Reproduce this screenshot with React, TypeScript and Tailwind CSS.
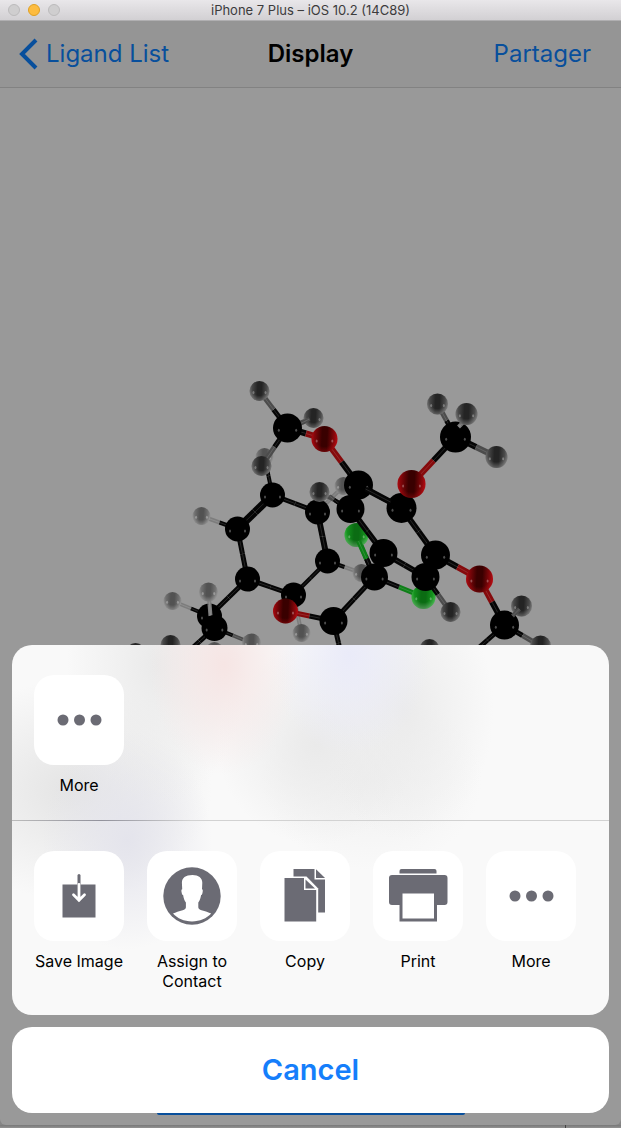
import type { ReactNode } from "react";

type Element = "C" | "H" | "O" | "Cl" | "G";
type Atom = [kind: Element, x: number, y: number, r: number];
type Bond = [x1: number, y1: number, c1: Element, x2: number, y2: number, c2: Element, width: number];

const bondColor: Record<Element, string> = {
  C: "#050505",
  H: "#4c4c4c",
  G: "#7d7d7d",
  O: "#850a0c",
  Cl: "#0e7f18",
};

/* Far to near: each layer draws its bonds and then its atoms. */
const layers: { bonds: Bond[]; atoms: Atom[] }[] = [
  {
    bonds: [
      [264, 457, "C", 272, 495, "C", 4],
      [343, 486, "G", 317, 512, "G", 4],
      [361, 573, "G", 327, 561, "C", 4],
      [301, 633, "G", 293, 595, "G", 4],
      [201, 516, "G", 237, 529, "C", 4],
      [272, 495, "C", 317, 512, "C", 5],
      [317, 512, "C", 327, 561, "C", 6],
      [327, 561, "C", 293, 595, "C", 4],
      [293, 595, "C", 247, 579, "C", 5],
      [247, 579, "C", 237, 529, "C", 5],
      [237, 529, "C", 272, 495, "C", 8],
      [247, 579, "C", 209, 616, "C", 5],
      [172, 601, "G", 209, 616, "C", 4],
    ],
    atoms: [
      ["G", 264, 457, 9],
      ["G", 343, 486, 9],
      ["G", 361, 573, 9],
      ["G", 301, 633, 9],
      ["G", 201, 516, 9],
      ["C", 272, 495, 12.5],
      ["C", 317, 512, 12.5],
      ["C", 327, 561, 12.5],
      ["C", 293, 595, 12.5],
      ["C", 247, 579, 12.5],
      ["C", 237, 529, 12.5],
      ["G", 172, 601, 9],
      ["C", 209, 616, 12.5],
      ["G", 214, 651, 9],
    ],
  },
  {
    bonds: [
      [208, 592, "G", 210, 616, "G", 4],
      [214, 628, "C", 251, 643, "H", 4],
      [214, 628, "C", 184, 655, "C", 5],
      [285, 611, "O", 333, 621, "C", 5],
      [333, 621, "C", 374, 577, "C", 5],
      [333, 621, "C", 343, 665, "C", 5],
      [356, 535, "Cl", 374, 577, "C", 5],
      [423, 597, "Cl", 374, 577, "C", 5],
    ],
    atoms: [
      ["G", 208, 592, 9.5],
      ["C", 214, 628, 13],
      ["G", 251, 643, 9.5],
      ["H", 170, 645, 10],
      ["H", 135, 653, 10],
      ["O", 285, 611, 12.5],
      ["C", 333, 621, 14],
      ["Cl", 356, 535, 12],
      ["Cl", 423, 597, 12],
    ],
  },
  {
    bonds: [[358, 541, "Cl", 374, 577, "C", 5]],
    atoms: [["C", 374, 577, 13.5]],
  },
  {
    bonds: [
      [319, 492, "H", 350, 509, "C", 4],
      [350, 509, "C", 383, 553, "C", 6],
      [383, 553, "C", 425, 577, "C", 6],
      [401, 508, "C", 435, 555, "C", 6],
      [358, 485, "C", 401, 508, "C", 6],
      [425, 577, "C", 450, 612, "H", 5],
      [435, 555, "C", 479, 579, "O", 6],
      [324, 439, "O", 358, 485, "C", 6],
      [287, 428, "C", 313, 418, "H", 5],
      [287, 428, "C", 259, 391, "H", 5],
      [287, 428, "C", 261, 466, "H", 5],
      [287, 428, "C", 324, 439, "O", 6],
      [411, 484, "O", 455, 437, "C", 6],
      [479, 579, "O", 504, 625, "C", 6],
      [504, 625, "C", 540, 646, "H", 5],
      [504, 625, "C", 470, 655, "C", 5],
      [455, 437, "C", 437, 404, "H", 5],
      [455, 437, "C", 496, 457, "H", 6],
    ],
    atoms: [
      ["H", 319, 492, 10],
      ["H", 450, 612, 10],
      ["C", 350, 509, 14],
      ["C", 383, 553, 14],
      ["C", 435, 555, 14.5],
      ["C", 425, 577, 14],
      ["C", 358, 485, 14.5],
      ["C", 401, 508, 15],
      ["H", 313, 418, 10],
      ["C", 287, 428, 14.5],
      ["H", 259, 391, 10],
      ["H", 261, 466, 10],
      ["O", 324, 439, 13],
      ["O", 411, 484, 14],
      ["O", 479, 579, 13.5],
      ["H", 437, 404, 10.5],
      ["C", 455, 437, 15.5],
      ["H", 496, 457, 11],
      ["C", 504, 625, 14.5],
      ["H", 521, 606, 10.5],
      ["H", 540, 646, 10.5],
      ["H", 429, 649, 10],
    ],
  },
  {
    bonds: [
      [365, 489, "C", 390, 502, "C", 5],
      [329, 496, "H", 338, 503, "C", 4],
      [458, 427, "G", 463, 422, "G", 4],
      [512, 616, "H", 519, 609, "H", 4],
      [301, 423, "H", 309, 419, "H", 4],
    ],
    atoms: [["H", 466, 414, 11]],
  },
];

function BondShape({ bond }: { bond: Bond }) {
  const [x1, y1, c1, x2, y2, c2, width] = bond;
  const mx = (x1 + x2) / 2;
  const my = (y1 + y2) / 2;
  return (
    <g strokeWidth={width}>
      <line x1={x1} y1={y1} x2={mx} y2={my} stroke={bondColor[c1]} />
      <line x1={mx} y1={my} x2={x2} y2={y2} stroke={bondColor[c2]} />
      <line x1={x1} y1={y1} x2={x2} y2={y2} stroke="#fff" strokeOpacity="0.13" strokeWidth="1" />
    </g>
  );
}

function AtomShape({ atom }: { atom: Atom }) {
  const [kind, x, y, r] = atom;
  return (
    <g>
      <circle cx={x} cy={y} r={r} fill={`url(#atom-${kind})`} />
      {kind !== "C" && <circle cx={x} cy={y} r={r} fill={kind === "O" ? "url(#rim-soft)" : "url(#rim)"} />}
      <ellipse cx={x - r * 0.6} cy={y + r * 0.15} rx="1" ry="1.500" fill="#fff" opacity="0.3" />
      <ellipse cx={x + r * 0.6} cy={y + r * 0.15} rx="1" ry="1.500" fill="#fff" opacity="0.3" />
    </g>
  );
}

function Gradient({ id, edge, middle }: { id: string; edge: string; middle: string }) {
  return (
    <linearGradient id={id} x1="0" x2="1" y1="0" y2="0.05">
      <stop offset="0" stopColor={edge} />
      <stop offset="0.42" stopColor={middle} />
      <stop offset="0.62" stopColor={middle} />
      <stop offset="1" stopColor={edge} />
    </linearGradient>
  );
}

function Molecule() {
  return (
    <svg
      viewBox="0 88 621 600"
      width="621"
      height="600"
      role="img"
      aria-label="Ligand"
      className="absolute top-0 left-1/2 max-w-none -translate-x-1/2"
    >
      <defs>
        <Gradient id="atom-C" edge="#000" middle="#000" />
        <Gradient id="atom-H" edge="#5c5c5c" middle="#242424" />
        <Gradient id="atom-G" edge="#808080" middle="#525252" />
        <Gradient id="atom-O" edge="#a80a10" middle="#390000" />
        <Gradient id="atom-Cl" edge="#18a322" middle="#0b6c13" />
        <radialGradient id="rim" cx="0.5" cy="0.35" r="0.68">
          <stop offset="0.55" stopColor="#fff" stopOpacity="0" />
          <stop offset="1" stopColor="#fff" stopOpacity="0.3" />
        </radialGradient>
        <radialGradient id="rim-soft" cx="0.5" cy="0.4" r="0.65">
          <stop offset="0.6" stopColor="#e01018" stopOpacity="0" />
          <stop offset="1" stopColor="#e01018" stopOpacity="0.35" />
        </radialGradient>
      </defs>
      {layers.map((layer, i) => (
        <g key={i}>
          {layer.bonds.map((bond, j) => (
            <BondShape key={j} bond={bond} />
          ))}
          {layer.atoms.map((atom, j) => (
            <AtomShape key={j} atom={atom} />
          ))}
        </g>
      ))}
    </svg>
  );
}

function Icon({ children }: { children: ReactNode }) {
  return (
    <svg viewBox="0 0 90 90" className="size-[90px]" fill="#6b6b74" aria-hidden="true">
      {children}
    </svg>
  );
}

const moreIcon = (
  <Icon>
    <circle cx="29" cy="45" r="5.500" />
    <circle cx="45.500" cy="45" r="5.500" />
    <circle cx="62" cy="45" r="5.500" />
  </Icon>
);

const saveIcon = (
  <Icon>
    <path d="M28.500 33.500h33v33h-33z" />
    <path d="M45 24.500v9" stroke="#6b6b74" strokeWidth="3" strokeLinecap="round" />
    <path d="M45 33.500v16M39.500 43.800l5.500 5.500 5.500-5.500" fill="none" stroke="#fff" strokeWidth="2.800" strokeLinecap="round" />
  </Icon>
);

const contactIcon = (
  <Icon>
    <circle cx="45" cy="45" r="28.700" />
    <path
      d="M45.500 24c6 0 9.800 3 9.800 7.800l-.3 6.400c1 0 .9 1.500.6 3-.3 1.700-.7 2.800-1.500 2.900-.5 3.200-1.300 5.500-2.800 7.400v4.800c0 1.600 1.200 2.300 3.200 2.900 3.700 1 7 1.900 9.700 3.400C59.500 67.500 53 70.500 45 70.500S30.500 67.500 26 62.600c2.700-1.500 6-2.400 9.700-3.400 2-.6 3.200-1.300 3.200-2.900v-4.800c-1.500-1.900-2.300-4.200-2.800-7.400-.8-.1-1.200-1.200-1.500-2.900-.3-1.500-.4-3 .6-3l-.3-6.400c0-4.800 3.500-7.800 10.600-7.800z"
      fill="#fff"
    />
  </Icon>
);

const copyIcon = (
  <Icon>
    <path d="M33.500 18H54.500v10.500H65V61.500H33.500z" />
    <path d="M56 18.300l9 8.700h-9z" />
    <path d="M23 25.500h23.500L58.200 37.500V72H23z" fill="#fff" />
    <path d="M24.500 27H44v12h12.200v31.500H24.500z" />
    <path d="M45.500 28.500l9.500 9h-9.500z" />
  </Icon>
);

const printIcon = (
  <Icon>
    <path d="M28.500 18h33a2 2 0 0 1 2 2v2.500h-37v-2.500a2 2 0 0 1 2-2z" />
    <path d="M19 24h52.500a3 3 0 0 1 3 3v24a3 3 0 0 1-3 3H64V70.500H26.500V54H19a3 3 0 0 1-3-3v-24a3 3 0 0 1 3-3z" />
    <path d="M29.500 42.500h31.500V67.500H29.500z" fill="#fff" />
  </Icon>
);

const actions = [
  { label: "Save Image", icon: saveIcon },
  { label: "Assign to Contact", icon: contactIcon },
  { label: "Copy", icon: copyIcon },
  { label: "Print", icon: printIcon },
  { label: "More", icon: moreIcon },
];

function ShareItem({ label, icon }: { label: string; icon: ReactNode }) {
  return (
    <button type="button" className="flex w-[90px] shrink-0 flex-col items-center gap-2.5">
      <span className="overflow-hidden rounded-[20px] bg-white">{icon}</span>
      <span className="text-base leading-5 text-black">{label}</span>
    </button>
  );
}

export default function App() {
  return (
    <div className="flex min-h-screen flex-col bg-[#858585] font-['Inter','Liberation_Sans',sans-serif]">
      <div className="flex flex-1 flex-col overflow-hidden rounded-b-md bg-[#999]">
        <header className="grid h-[21px] grid-cols-[1fr_auto_1fr] items-center border-b border-[#b0afb1] bg-linear-to-b from-[#e9e7ea] to-[#d2d0d3] px-2">
          <div className="flex gap-2">
            <button type="button" aria-label="Close" className="size-3 rounded-full border border-[#bcbbbc] bg-[#cfcecf]" />
            <button type="button" aria-label="Minimize" className="size-3 rounded-full border border-[#dfa023] bg-[#fdbc40]" />
            <button type="button" aria-label="Zoom" className="size-3 rounded-full border border-[#bcbbbc] bg-[#cfcecf]" />
          </div>
          <span className="text-[13px] leading-5 text-[#3c3b3c]">iPhone 7 Plus – iOS 10.2 (14C89)</span>
        </header>

        <nav className="grid h-[67px] grid-cols-[1fr_auto_1fr] items-center border-b border-[#828282] bg-[#959595] px-[18px] text-2xl text-[#084f9c]">
          <a href="#ligands" className="flex items-center gap-2">
            <svg viewBox="0 0 20 32" className="h-8 w-5" fill="none" stroke="currentColor" strokeWidth="4" aria-hidden="true">
              <path d="M18 2 4 16l14 14" />
            </svg>
            Ligand List
          </a>
          <h1 className="font-semibold text-black">Display</h1>
          <button type="button" className="mr-3 justify-self-end">
            Partager
          </button>
        </nav>

        <main className="relative flex flex-1 flex-col justify-end px-3 pb-3">
          <Molecule />
          <div role="dialog" aria-label="Share" className="relative flex flex-col gap-3">
            <div className="overflow-hidden rounded-[20px] bg-[#f9f9f9] bg-[radial-gradient(ellipse_75px_110px_at_212px_20px,#f6e5e4_0,#f6e5e480_50%,transparent_100%),radial-gradient(ellipse_80px_100px_at_338px_10px,#eaebf9_0,#eaebf980_50%,transparent_100%),radial-gradient(ellipse_90px_130px_at_392px_65px,#ebebeb_0,#ebebeb80_50%,transparent_100%),radial-gradient(ellipse_100px_100px_at_305px_100px,#eaeaea_0,#eaeaea80_50%,transparent_100%),radial-gradient(ellipse_110px_90px_at_360px_135px,#f0f0f0_0,#f0f0f080_50%,transparent_100%),radial-gradient(ellipse_90px_140px_at_145px_20px,#eaeaea_0,#eaeaea80_50%,transparent_100%),radial-gradient(ellipse_85px_110px_at_115px_195px,#e4e4ec_0,#e4e4ec80_50%,transparent_100%),radial-gradient(ellipse_140px_110px_at_60px_145px,#e4e4e4_0,#e4e4e480_50%,transparent_100%)]">
              <div className="flex px-[22px] pt-[30px] pb-[25px]">
                <ShareItem label="More" icon={moreIcon} />
              </div>
              <hr className="h-px border-0 bg-linear-to-r from-[#bbb] from-0% via-[#92929c] via-15% to-[#d2d2d2] to-30%" />
              <div className="flex gap-[23px] overflow-x-auto px-[22px] pt-[30px] pb-6">
                {actions.map((action) => (
                  <ShareItem key={action.label} label={action.label} icon={action.icon} />
                ))}
              </div>
            </div>
            <button type="button" className="h-[86px] rounded-[20px] bg-white text-[29px] font-semibold text-[#157efb]">
              Cancel
            </button>
          </div>
          <span className="absolute bottom-2.5 left-1/2 h-0.5 w-[308px] -translate-x-1/2 rounded-b-sm bg-[#084f9c]" />
        </main>
      </div>
      <footer className="flex h-[3px] justify-end bg-linear-to-b from-[#777] to-[#939393]">
        <span className="mr-[55px] w-px bg-[#444]" />
      </footer>
    </div>
  );
}
